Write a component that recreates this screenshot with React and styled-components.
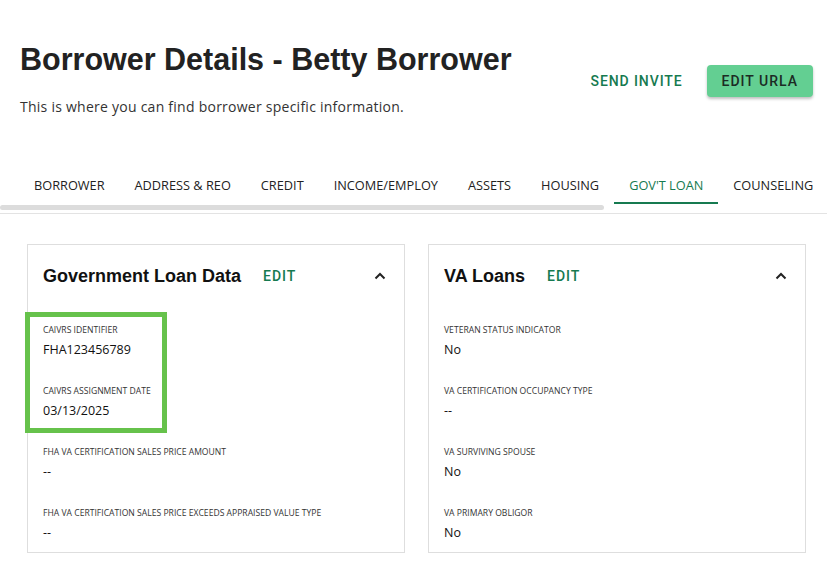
import React from 'react';
import styled, { createGlobalStyle } from 'styled-components';

const GlobalStyle = createGlobalStyle`
  body {
    margin: 0;
    background: #fff;
    font-family: "Open Sans", "Noto Sans", sans-serif;
    color: #222;
  }
`;

const Page = styled.div`
  width: 827px;
  height: 561px;
  overflow: hidden;
`;

const Header = styled.header`
  display: flex;
  justify-content: space-between;
  align-items: flex-start;
  padding: 41px 14px 0 20px;
`;

const Title = styled.h1`
  margin: 0;
  font-family: "Liberation Sans", Arial, sans-serif;
  font-size: 30.5px;
  line-height: 36px;
  font-weight: 700;
  color: #222;
`;

const Subtitle = styled.p`
  margin: 21px 0 0;
  font-size: 14px;
  line-height: 18px;
  letter-spacing: 0.25px;
  color: #333;
`;

const Actions = styled.div`
  display: flex;
  align-items: center;
  gap: 16px;
  margin-top: 24px;
`;

const TextButton = styled.button`
  border: none;
  background: none;
  padding: 8px 8px;
  font-family: Roboto, sans-serif;
  font-weight: 500;
  font-size: 14px;
  letter-spacing: 0.9px;
  color: #167a50;
  cursor: pointer;
`;

const FilledButton = styled.button`
  border: none;
  border-radius: 4px;
  height: 32px;
  padding: 0 15px;
  background: #63cf92;
  box-shadow: 0 2px 3px rgba(0, 0, 0, 0.25);
  font-family: Roboto, sans-serif;
  font-weight: 500;
  font-size: 14px;
  letter-spacing: 1px;
  color: #1c2b24;
  cursor: pointer;
`;

const TabsWrap = styled.div`
  margin-top: 49px;
  border-bottom: 1px solid #e3e3e3;
  padding-bottom: 3px;
`;

const TabRow = styled.nav`
  display: flex;
  padding-left: 19px;
`;

const Tab = styled.div`
  padding: 11px 15px 8px;
  font-size: 12.75px;
  line-height: 18px;
  color: ${p => (p.$active ? '#167a50' : '#222')};
  border-bottom: 2px solid ${p => (p.$active ? '#167a50' : 'transparent')};
  white-space: nowrap;
`;

const ScrollThumb = styled.div`
  width: 604px;
  height: 5px;
  margin-top: 1px;
  border-radius: 3px;
  background: #dcdcdc;
`;

const Cards = styled.main`
  display: grid;
  grid-template-columns: 378px 378px;
  gap: 23px;
  padding: 30px 0 0 27px;
`;

const Card = styled.section`
  position: relative;
  border: 1px solid #dedede;
  padding: 0 15px 10px;
  background: #fff;
`;

const CardHead = styled.div`
  display: flex;
  align-items: center;
  height: 62px;
`;

const CardTitle = styled.h2`
  margin: 0;
  font-family: "Liberation Sans", Arial, sans-serif;
  font-size: 18px;
  font-weight: 700;
  color: #111;
`;

const EditLink = styled.span`
  margin-left: 22px;
  font-family: Roboto, sans-serif;
  font-weight: 500;
  font-size: 14px;
  letter-spacing: 1px;
  color: #167a50;
`;

const Chevron = styled.svg`
  margin-left: auto;
  margin-right: 3px;
`;

const Fields = styled.div`
  display: flex;
  flex-direction: column;
  gap: 26px;
  padding-top: 17px;
`;

const Field = styled.div`
  display: flex;
  flex-direction: column;
  gap: 5px;
`;

const Label = styled.div`
  font-size: 8.6px;
  line-height: 12px;
  color: #333;
  text-transform: uppercase;
`;

const Value = styled.div`
  font-size: 12.5px;
  line-height: 18px;
  color: #111;
`;

const Highlight = styled.div`
  position: absolute;
  left: -3px;
  top: 67px;
  width: 132px;
  height: 111px;
  border: 5px solid #66c24b;
  pointer-events: none;
`;

const tabs = ['BORROWER', 'ADDRESS & REO', 'CREDIT', 'INCOME/EMPLOY', 'ASSETS', 'HOUSING', "GOV'T LOAN", 'COUNSELING'];

const govFields = [
  ['CAIVRS Identifier', 'FHA123456789'],
  ['CAIVRS Assignment Date', '03/13/2025'],
  ['FHA VA Certification Sales Price Amount', '--'],
  ['FHA VA Certification Sales Price Exceeds Appraised Value Type', '--'],
];

const vaFields = [
  ['Veteran Status Indicator', 'No'],
  ['VA Certification Occupancy Type', '--'],
  ['VA Surviving Spouse', 'No'],
  ['VA Primary Obligor', 'No'],
];

const ChevronUp = () => (
  <Chevron width="12" height="8" viewBox="0 0 12 8">
    <path d="M1.5 6.5 L6 2 L10.5 6.5" fill="none" stroke="#222" strokeWidth="2" />
  </Chevron>
);

const DataCard = ({ title, fields, highlight }) => (
  <Card>
    <CardHead>
      <CardTitle>{title}</CardTitle>
      <EditLink>EDIT</EditLink>
      <ChevronUp />
    </CardHead>
    <Fields>
      {fields.map(([label, value]) => (
        <Field key={label}>
          <Label>{label}</Label>
          <Value>{value}</Value>
        </Field>
      ))}
    </Fields>
    {highlight && <Highlight />}
  </Card>
);

const App = () => {
  return (
    <Page>
      <GlobalStyle />
      <Header>
        <div>
          <Title>Borrower Details - Betty Borrower</Title>
          <Subtitle>This is where you can find borrower specific information.</Subtitle>
        </div>
        <Actions>
          <TextButton>SEND INVITE</TextButton>
          <FilledButton>EDIT URLA</FilledButton>
        </Actions>
      </Header>

      <TabsWrap>
        <TabRow>
          {tabs.map(t => (
            <Tab key={t} $active={t === "GOV'T LOAN"}>{t}</Tab>
          ))}
        </TabRow>
        <ScrollThumb />
      </TabsWrap>

      <Cards>
        <DataCard title="Government Loan Data" fields={govFields} highlight />
        <DataCard title="VA Loans" fields={vaFields} />
      </Cards>
    </Page>
  );
};

export default App;
